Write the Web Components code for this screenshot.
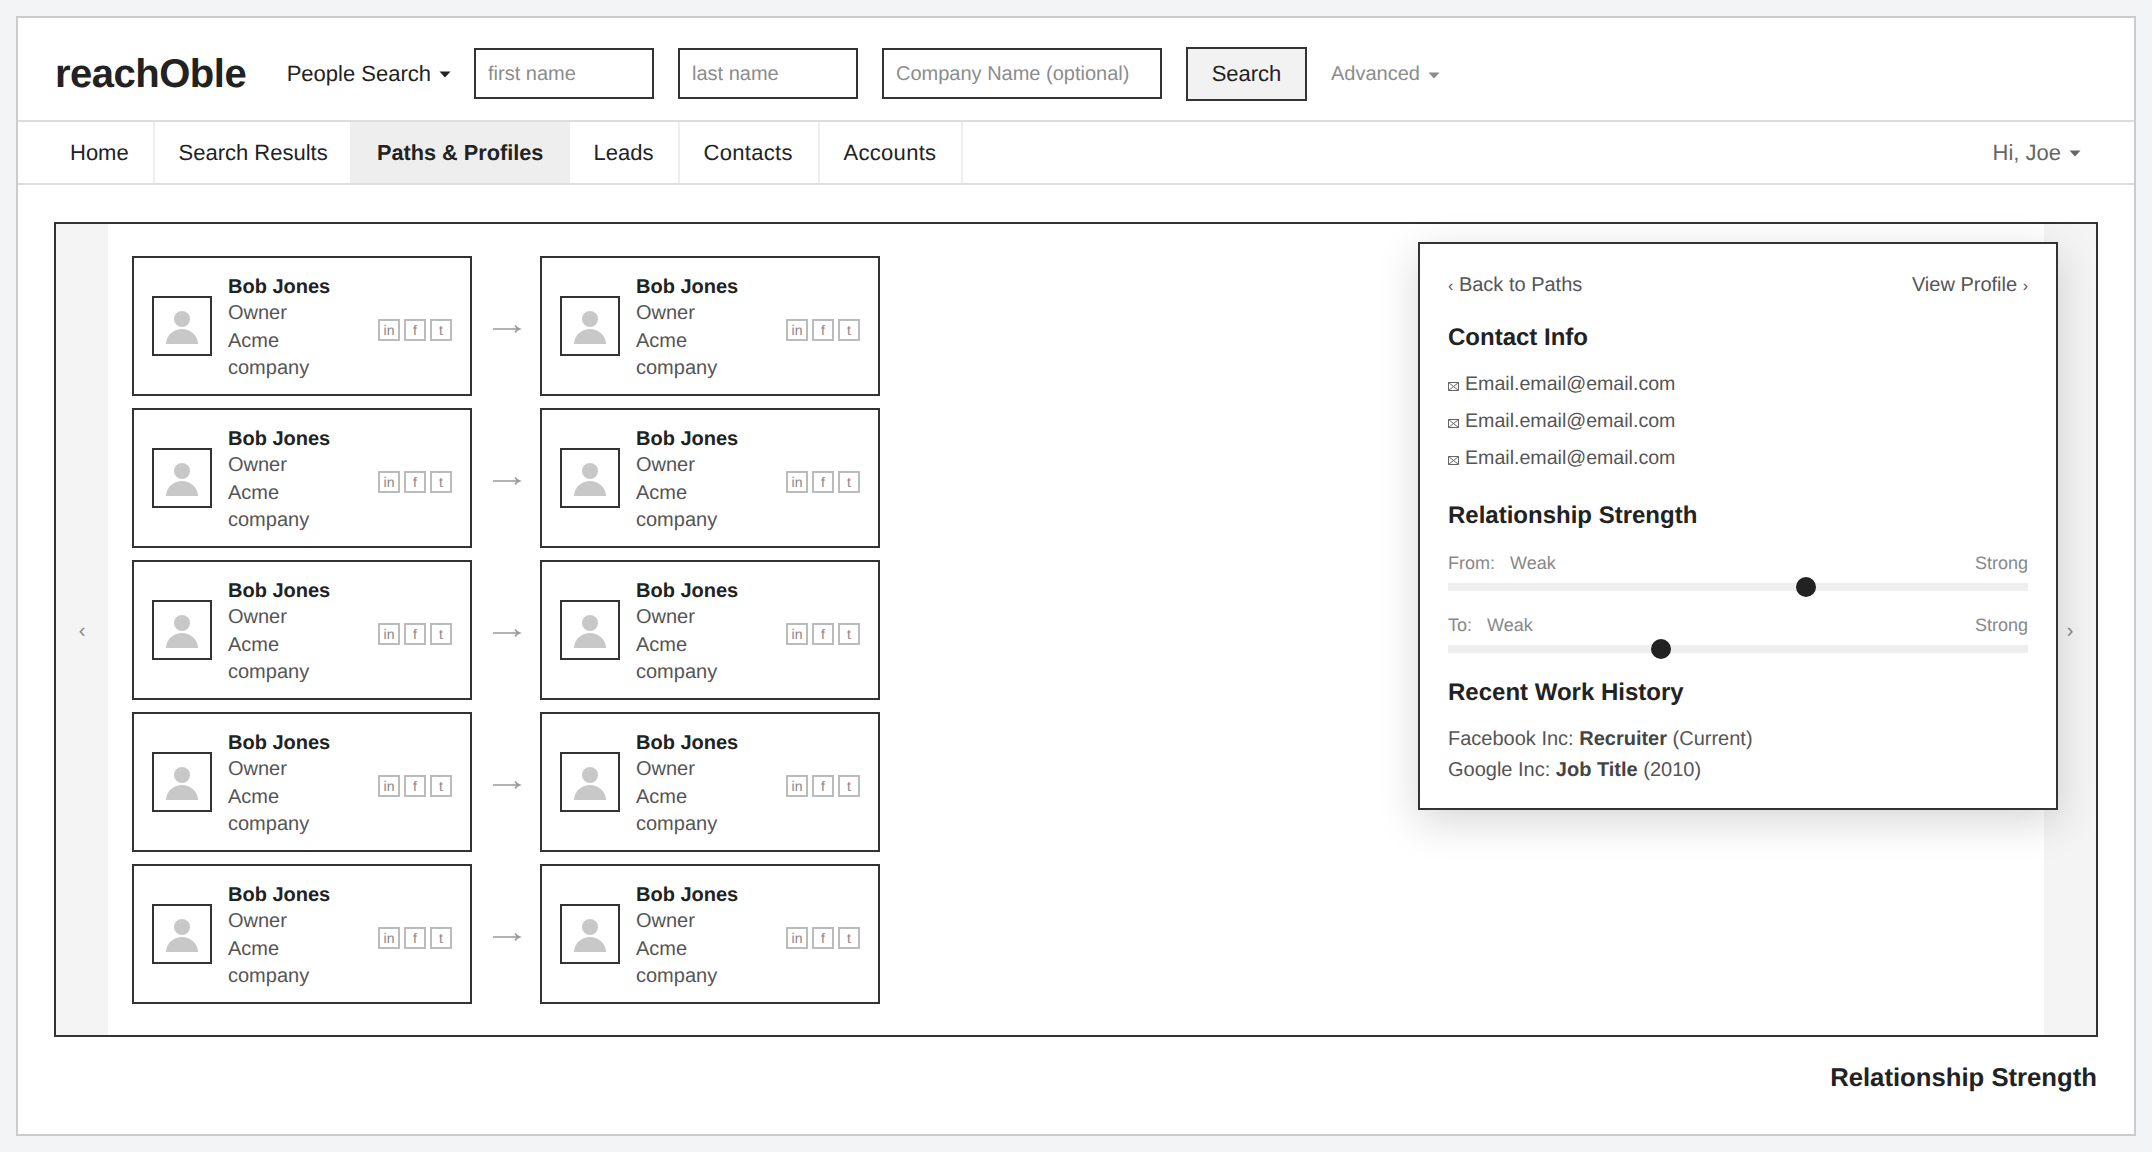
<!DOCTYPE html>
<html>
<head>
<meta charset="utf-8">
<title>reachOble</title>
<style>
  html, body { margin: 0; padding: 0; }
  body {
    background: #f3f4f6;
    padding: 16px;
    font-family: "Liberation Sans", Arial, sans-serif;
    text-rendering: geometricPrecision;
    color: #222;
  }
</style>
</head>
<body>
<app-frame>
  <top-bar></top-bar>
  <nav-bar>
    <nav-item first style="width:137px">Home</nav-item>
    <nav-item style="width:197px">Search Results</nav-item>
    <nav-item active style="width:218px">Paths &amp; Profiles</nav-item>
    <nav-item style="width:110px">Leads</nav-item>
    <nav-item style="width:140px;letter-spacing:.3px">Contacts</nav-item>
    <nav-item style="width:143px;letter-spacing:.3px">Accounts</nav-item>
    <drop-label slot="right" size="22" color="#666">Hi, Joe</drop-label>
  </nav-bar>
  <path-carousel>
    <path-list count="5"></path-list>
    <profile-panel slot="overlay"></profile-panel>
  </path-carousel>
  <page-caption>Relationship Strength</page-caption>
</app-frame>

<script>
class AppFrame extends HTMLElement {
  constructor() {
    super();
    this.attachShadow({ mode: 'open' });
    this.shadowRoot.innerHTML = `
      <style>
        :host {
          display: block;
          height: 1120px;
          box-sizing: border-box;
          background: #fff;
          border: 2px solid #ccc;
        }
      </style>
      <slot></slot>
    `;
  }
}

// text followed by a small triangle
class DropLabel extends HTMLElement {
  constructor() {
    super();
    this.attachShadow({ mode: 'open' });
  }

  connectedCallback() {
    const size = this.getAttribute('size') || 20;
    const color = this.getAttribute('color') || '#222';
    this.shadowRoot.innerHTML = `
      <style>
        :host {
          display: inline-flex;
          align-items: center;
          gap: 8px;
          font-size: ${size}px;
          color: ${color};
          white-space: nowrap;
        }
        svg { display: block; margin-top: 1px; }
      </style>
      <slot></slot>
      <svg width="12" height="7" viewBox="0 0 12 7"><path d="M0.5 0.5h11L6 6.5z" fill="${color}"/></svg>
    `;
  }
}

class TopBar extends HTMLElement {
  constructor() {
    super();
    this.attachShadow({ mode: 'open' });
    this.shadowRoot.innerHTML = `
      <style>
        :host {
          display: flex;
          align-items: center;
          gap: 24px;
          box-sizing: border-box;
          height: 104px;
          padding: 9px 0 0 37px;
          border-bottom: 2px solid #ddd;
        }
        .logo {
          font-size: 40px;
          letter-spacing: -0.5px;
          font-weight: bold;
          color: #222;
          margin: 2px 16.5px 0 0;
        }
        .people { margin-right: -1px; }
        input {
          box-sizing: border-box;
          height: 51px;
          padding: 2px 12px 0;
          border: 2px solid #333;
          border-radius: 0;
          outline: none;
          font: 20px "Liberation Sans", Arial, sans-serif;
          text-rendering: geometricPrecision;
          color: #222;
        }
        input::placeholder { color: #8c8c8c; opacity: 1; }
        .short { width: 180px; }
        .long { width: 280px; }
        button {
          box-sizing: border-box;
          width: 121px;
          height: 54px;
          background: #f2f2f2;
          border: 2px solid #333;
          border-radius: 0;
          font: 22px "Liberation Sans", Arial, sans-serif;
          text-rendering: geometricPrecision;
          color: #222;
        }
        .advanced { margin-top: 2px; }
      </style>
      <div class="logo">reachOble</div>
      <drop-label class="people" size="22">People Search</drop-label>
      <input class="short" placeholder="first name">
      <input class="short" placeholder="last name">
      <input class="long" placeholder="Company Name (optional)">
      <button>Search</button>
      <drop-label class="advanced" size="20" color="#8c8c8c">Advanced</drop-label>
    `;
  }
}

class NavBar extends HTMLElement {
  constructor() {
    super();
    this.attachShadow({ mode: 'open' });
    this.shadowRoot.innerHTML = `
      <style>
        :host {
          display: flex;
          align-items: stretch;
          justify-content: space-between;
          height: 61px;
          border-bottom: 2px solid #ddd;
        }
        .items { display: flex; }
        .right { display: flex; align-items: center; padding-right: 53px; }
      </style>
      <div class="items"><slot></slot></div>
      <div class="right"><slot name="right"></slot></div>
    `;
  }
}

class NavItem extends HTMLElement {
  constructor() {
    super();
    this.attachShadow({ mode: 'open' });
    this.shadowRoot.innerHTML = `
      <style>
        :host {
          display: flex;
          align-items: center;
          flex: none;
          box-sizing: border-box;
          padding-left: 23.5px;
          border-right: 2px solid #eee;
          font-size: 22px;
          color: #222;
        }
        :host([first]) { padding-left: 52px; }
        :host([active]) {
          background: #eee;
          border-right: 0;
          padding-left: 25px;
          font-size: 21.7px;
          font-weight: bold;
        }
      </style>
      <slot></slot>
    `;
  }
}

class PathCarousel extends HTMLElement {
  constructor() {
    super();
    this.attachShadow({ mode: 'open' });
    this.shadowRoot.innerHTML = `
      <style>
        :host {
          display: flex;
          position: relative;
          box-sizing: border-box;
          height: 815px;
          margin: 37px 36px 0;
          border: 2px solid #333;
        }
        .side {
          flex: none;
          width: 52px;
          display: flex;
          align-items: center;
          justify-content: center;
          background: #f4f4f4;
          color: #888;
          font-size: 20px;
          padding-top: 3px;
          box-sizing: border-box;
        }
        .middle { flex: 1; padding: 32px 24px; }
      </style>
      <div class="side">‹</div>
      <div class="middle"><slot></slot></div>
      <div class="side">›</div>
      <slot name="overlay"></slot>
    `;
  }
}

class PathList extends HTMLElement {
  constructor() {
    super();
    this.attachShadow({ mode: 'open' });
  }

  connectedCallback() {
    const count = Number(this.getAttribute('count')) || 1;
    const arrow = `
      <svg class="arrow" width="68" height="12" viewBox="0 0 68 12">
        <path d="M21 6h26M43 2.5q1.5 2.5 4.5 3.5q-3 1-4.5 3.5" fill="none" stroke="#999" stroke-width="1.6"/>
      </svg>`;
    let rows = '';
    for (let i = 0; i < count; i++) {
      rows += `<div class="row"><person-card></person-card>${arrow}<person-card></person-card></div>`;
    }
    this.shadowRoot.innerHTML = `
      <style>
        :host { display: flex; flex-direction: column; gap: 12px; }
        .row { display: flex; align-items: center; }
        .arrow { display: block; flex: none; margin-top: 6px; }
      </style>
      ${rows}
    `;
  }
}

class PersonCard extends HTMLElement {
  constructor() {
    super();
    this.attachShadow({ mode: 'open' });
    this.shadowRoot.innerHTML = `
      <style>
        :host {
          display: flex;
          align-items: center;
          flex: none;
          box-sizing: border-box;
          width: 340px;
          height: 140px;
          padding: 0 18px;
          border: 2px solid #333;
        }
        .avatar {
          flex: none;
          box-sizing: border-box;
          width: 60px;
          height: 60px;
          border: 2px solid #333;
        }
        .avatar svg { display: block; }
        .info {
          flex: 1;
          margin: 4px 0 0 16px;
          padding-right: 16px;
          font-size: 20px;
          line-height: 27.4px;
          color: #555;
        }
        .name { font-weight: bold; color: #222; margin-bottom: -1px; }
        .social { display: flex; gap: 4px; flex: none; margin-top: 8px; }
        .social span {
          box-sizing: border-box;
          width: 22px;
          height: 22px;
          border: 2px solid #bbb;
          display: flex;
          align-items: center;
          justify-content: center;
          font-size: 14px;
          color: #888;
        }
      </style>
      <div class="avatar">
        <svg width="56" height="56" viewBox="0 0 56 56">
          <circle cx="28" cy="21" r="8" fill="#c8c8c8"/>
          <path d="M12 46c0-8 7-15 16-15s16 7 16 15z" fill="#c8c8c8"/>
        </svg>
      </div>
      <div class="info">
        <div class="name">Bob Jones</div>
        Owner<br>Acme company
      </div>
      <div class="social"><span>in</span><span>f</span><span>t</span></div>
    `;
  }
}

class StrengthSlider extends HTMLElement {
  constructor() {
    super();
    this.attachShadow({ mode: 'open' });
  }

  connectedCallback() {
    const label = this.getAttribute('label');
    const value = this.getAttribute('value');
    this.shadowRoot.innerHTML = `
      <style>
        :host { display: block; font-size: 18px; color: #888; }
        .labels { display: flex; line-height: 24px; }
        .labels .from { margin-right: 15px; }
        .labels .end { margin-left: auto; }
        .track { position: relative; height: 8px; margin-top: 8px; background: #eee; }
        .thumb {
          position: absolute;
          top: -6px;
          left: ${value}%;
          width: 20px;
          height: 20px;
          margin-left: -10px;
          border-radius: 50%;
          background: #222;
        }
      </style>
      <div class="labels">
        <span class="from">${label}</span><span>Weak</span><span class="end">Strong</span>
      </div>
      <div class="track"><div class="thumb"></div></div>
    `;
  }
}

class ProfilePanel extends HTMLElement {
  constructor() {
    super();
    this.attachShadow({ mode: 'open' });
    const mail = `
      <svg width="11" height="9" viewBox="0 0 11 9">
        <path d="M.5.5h10v8H.5zM.5.5l10 8M10.5.5l-10 8" fill="none" stroke="#666" stroke-width="1"/>
      </svg>`;
    const email = `<div class="email">${mail}<span>Email.email@email.com</span></div>`;
    this.shadowRoot.innerHTML = `
      <style>
        :host {
          position: absolute;
          top: 18px;
          right: 38px;
          box-sizing: border-box;
          width: 640px;
          padding: 27px 28px 22px;
          background: #fff;
          border: 2px solid #333;
          box-shadow: 0 12px 40px rgba(0, 0, 0, 0.16);
          font-size: 20px;
          color: #555;
        }
        .links { display: flex; justify-content: space-between; line-height: 28px; }
        .links i { font-style: normal; font-size: 16px; line-height: 1; }
        h3 { margin: 0; font-size: 24px; line-height: 32px; color: #222; }
        .contact { margin-top: 23px; }
        .emails { margin-top: 12px; }
        .email { display: flex; align-items: center; gap: 6px; line-height: 37px; font-size: 19.6px; }
        .email svg { margin-top: 4px; }
        .strength { margin-top: 23px; }
        strength-slider { margin-top: 22px; }
        strength-slider.first { margin-top: 19px; }
        .history { margin-top: 24px; }
        .jobs { margin-top: 15px; line-height: 31px; }
        .jobs b { color: #444; }
      </style>
      <div class="links"><span><i>‹</i> Back to Paths</span><span>View Profile <i>›</i></span></div>
      <h3 class="contact">Contact Info</h3>
      <div class="emails">${email}${email}${email}</div>
      <h3 class="strength">Relationship Strength</h3>
      <strength-slider class="first" label="From:" value="61.7"></strength-slider>
      <strength-slider label="To:" value="36.7"></strength-slider>
      <h3 class="history">Recent Work History</h3>
      <div class="jobs">
        <div>Facebook Inc: <b>Recruiter</b> (Current)</div>
        <div>Google Inc: <b>Job Title</b> (2010)</div>
      </div>
    `;
  }
}

class PageCaption extends HTMLElement {
  constructor() {
    super();
    this.attachShadow({ mode: 'open' });
    this.shadowRoot.innerHTML = `
      <style>
        :host {
          display: block;
          margin: 23px 37px 0 0;
          text-align: right;
          font-size: 25.7px;
          font-weight: bold;
          line-height: 36px;
          color: #222;
        }
      </style>
      <slot></slot>
    `;
  }
}

customElements.define('app-frame', AppFrame);
customElements.define('drop-label', DropLabel);
customElements.define('top-bar', TopBar);
customElements.define('nav-bar', NavBar);
customElements.define('nav-item', NavItem);
customElements.define('path-carousel', PathCarousel);
customElements.define('path-list', PathList);
customElements.define('person-card', PersonCard);
customElements.define('strength-slider', StrengthSlider);
customElements.define('profile-panel', ProfilePanel);
customElements.define('page-caption', PageCaption);
</script>
</body>
</html>
